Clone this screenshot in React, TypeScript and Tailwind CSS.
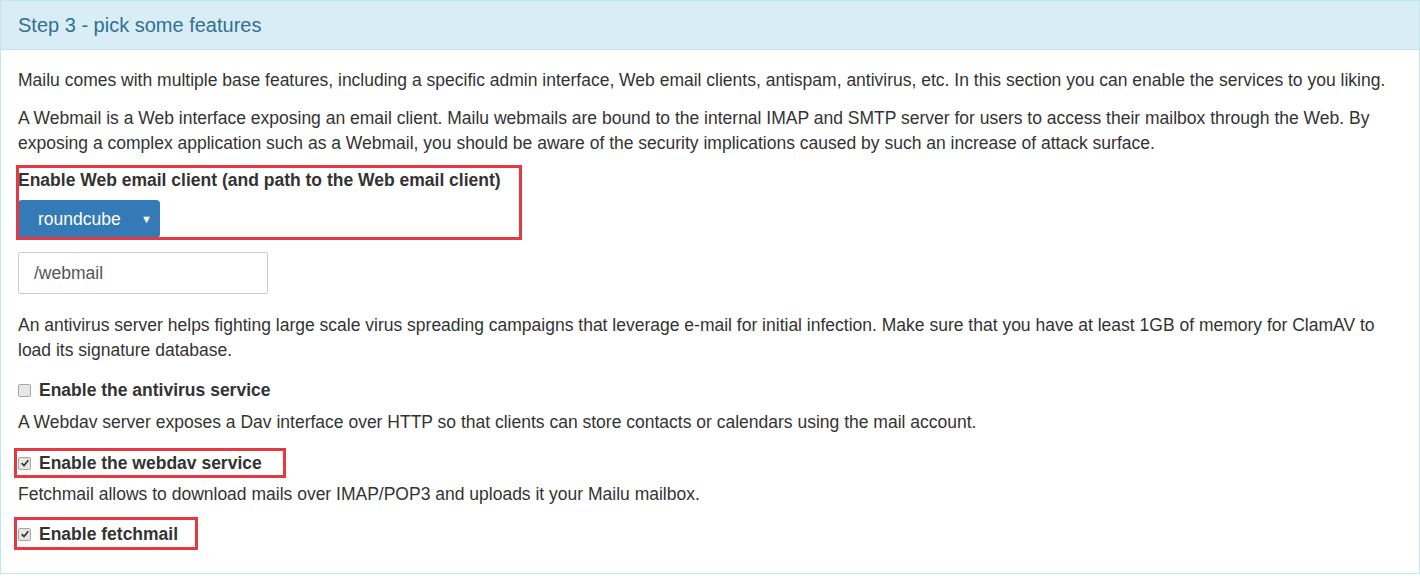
import React from "react";

function Check({ checked }: { checked?: boolean }) {
  return (
    <span className="flex h-[13px] w-[13px] shrink-0 items-center justify-center rounded-[2px] border border-[#a6a6a6] bg-[#e6e6e6]">
      {checked && (
        <svg viewBox="0 0 12 12" className="h-[10px] w-[10px]">
          <path d="M2 6.2 L4.8 9 L10 2.8" fill="none" stroke="#333" strokeWidth="2" />
        </svg>
      )}
    </span>
  );
}

function CheckRow({
  label,
  checked,
  box,
}: {
  label: string;
  checked?: boolean;
  box?: string;
}) {
  return (
    <div className="relative flex h-[25px] items-center">
      <div className="flex items-center gap-[8px]">
        <Check checked={checked} />
        <span className="font-bold">{label}</span>
      </div>
      {box && <span className={`pointer-events-none absolute border-[3px] border-[#e43943] ${box}`} />}
    </div>
  );
}

export default function App() {
  return (
    <div
      className="min-h-[581px] bg-white text-[17.5px] leading-[25px] text-[#333]"
      style={{ fontFamily: '"Liberation Sans", Arial, sans-serif' }}
    >
      <div className="border border-[#bce8f1]">
        <div className="flex h-[49px] items-center border-b border-[#bce8f1] bg-[#d9edf7] px-[17px] pt-[1px] text-[20px] text-[#31708f]">
          Step 3 - pick some features
        </div>
        <div className="px-[17px] pt-[18px] pb-[26px]">
          <p className="mb-[12.5px]">
            Mailu comes with multiple base features, including a specific admin interface, Web email clients, antispam,
            antivirus, etc. In this section you can enable the services to you liking.
          </p>
          <p className="mb-[12.5px]">
            A Webmail is a Web interface exposing an email client. Mailu webmails are bound to the internal IMAP and SMTP
            server for users to access their mailbox through the Web. By exposing a complex application such as a
            Webmail, you should be aware of the security implications caused by such an increase of attack surface.
          </p>
          <div className="relative">
            <div className="font-bold">Enable Web email client (and path to the Web email client)</div>
            <div className="mt-[7px] flex h-[38px] w-[142px] items-center justify-between rounded-[4px] bg-[#337ab7] pr-[8px] pl-[20px] text-white">
              <span>roundcube</span>
              <span className="text-[11px]">▼</span>
            </div>
            <span className="pointer-events-none absolute -top-[3px] -left-[2px] h-[75px] w-[506px] border-[3px] border-[#e43943]" />
          </div>
          <div className="mt-[14px] flex h-[42px] w-[250px] items-center rounded-[2px] border border-[#ccc] px-[15px] text-[#555]">
            /webmail
          </div>
          <p className="mt-[18.5px] mb-[15px]">
            An antivirus server helps fighting large scale virus spreading campaigns that leverage e-mail for initial
            infection. Make sure that you have at least 1GB of memory for ClamAV to load its signature database.
          </p>
          <CheckRow label="Enable the antivirus service" />
          <p className="mt-[7px] mb-[16px]">
            A Webdav server exposes a Dav interface over HTTP so that clients can store contacts or calendars using the
            mail account.
          </p>
          <CheckRow
            label="Enable the webdav service"
            checked
            box="-top-[2.5px] -left-[4px] h-[30px] w-[272px]"
          />
          <p className="mt-[6px] mb-[15px]">
            Fetchmail allows to download mails over IMAP/POP3 and uploads it your Mailu mailbox.
          </p>
          <CheckRow label="Enable fetchmail" checked box="-top-[4.5px] -left-[4px] h-[33px] w-[184px]" />
        </div>
      </div>
    </div>
  );
}
